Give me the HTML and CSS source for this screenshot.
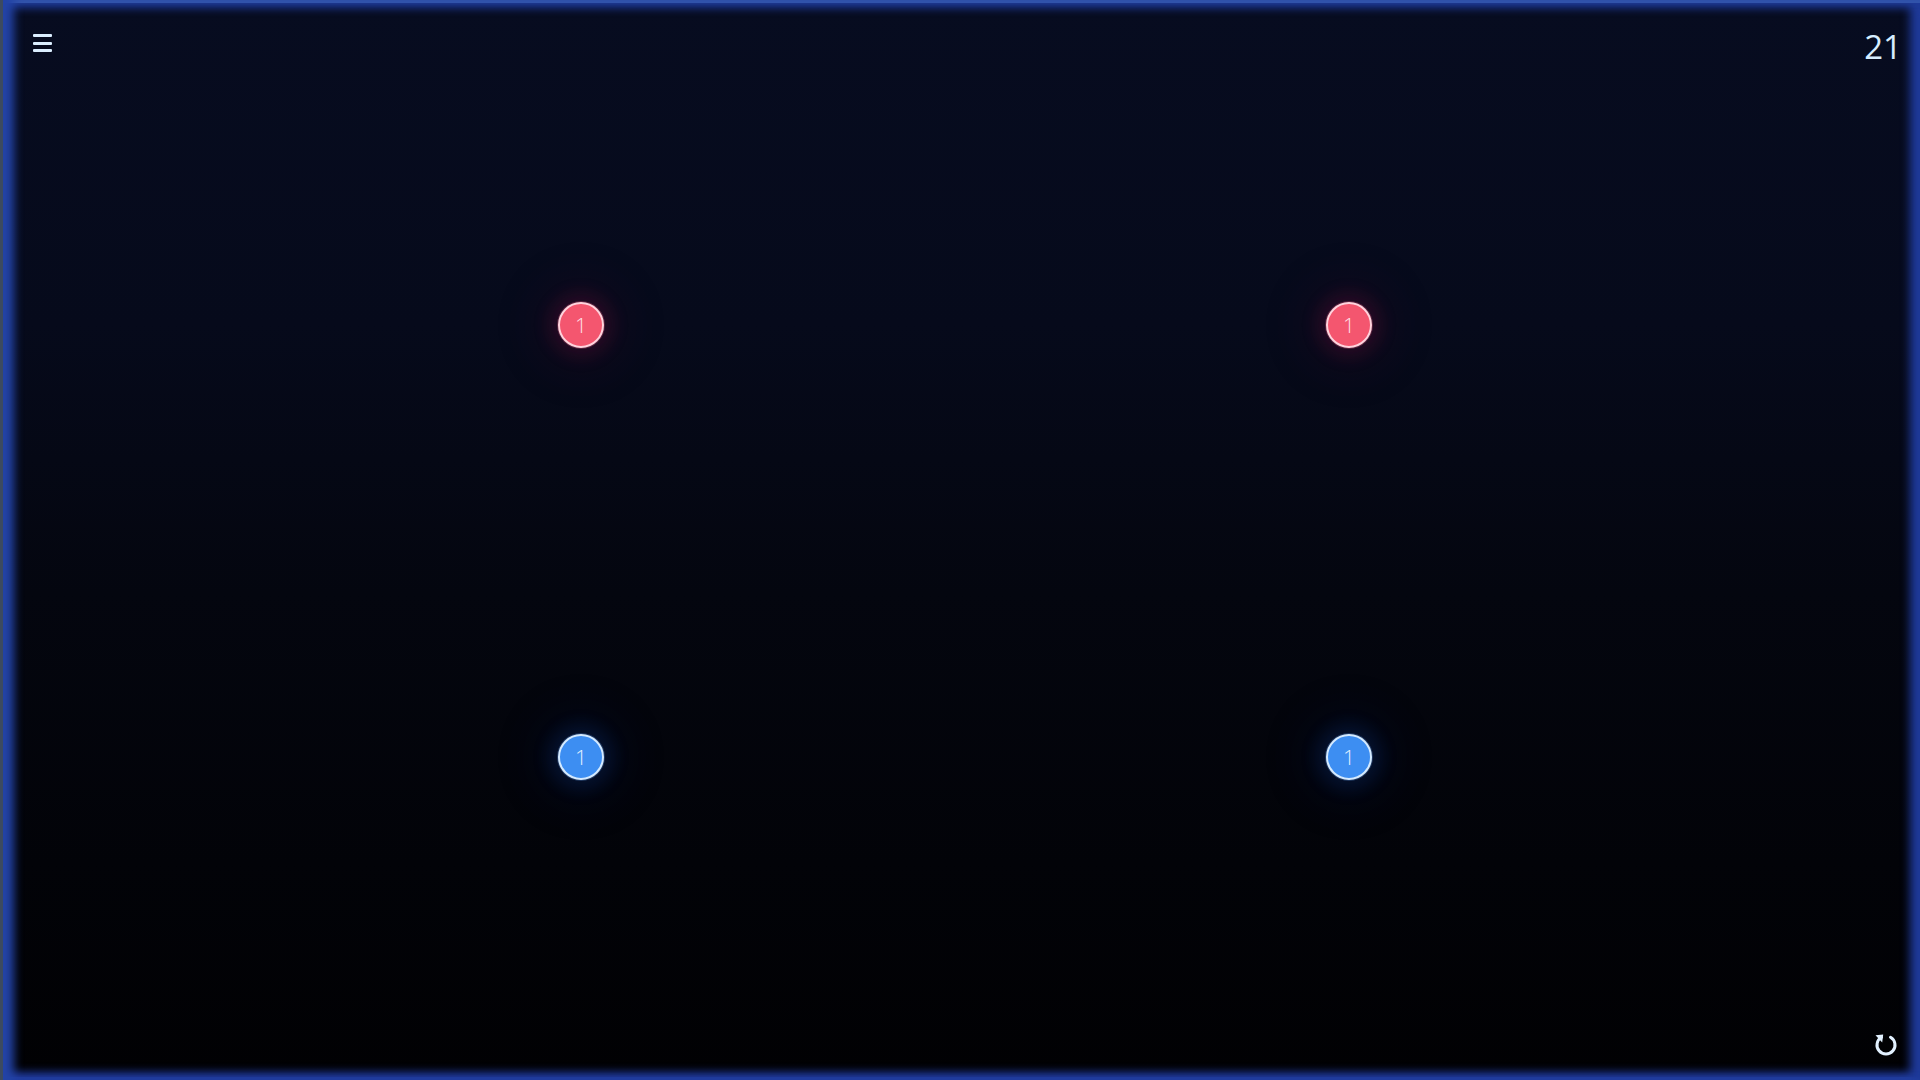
FILE: index.html
```html
<!DOCTYPE html>
<html lang="en">
<head>
<meta charset="utf-8">
<title>Board</title>
<link rel="stylesheet" href="styles.css">
</head>
<body>
<div class="frame">
  <header class="topbar">
    <button class="menu" aria-label="Menu">
      <span class="bar"></span><span class="bar"></span><span class="bar"></span>
    </button>
    <div class="score">21</div>
  </header>
  <main class="board">
    <div class="node red n1"><span>1</span></div>
    <div class="node red n2"><span>1</span></div>
    <div class="node blue n3"><span>1</span></div>
    <div class="node blue n4"><span>1</span></div>
  </main>
  <footer class="bottombar">
    <button class="restart" aria-label="Restart">
      <svg viewBox="0 0 28 26" width="28" height="26">
        <path d="M9.5 5.2 A9 9 0 1 0 18.5 5.2" fill="none" stroke="#e2f1ff" stroke-width="3" stroke-linecap="round"/>
        <path d="M3.5 3.2 L11.2 2.6 L10.2 10.4 Z" fill="#e2f1ff"/>
      </svg>
    </button>
  </footer>
</div>
</body>
</html>
```
FILE: styles.css
```css
html, body {
  margin: 0;
  padding: 0;
  width: 100%;
  height: 100%;
  background: #02030a;
  overflow: hidden;
}

.frame {
  position: relative;
  width: 1920px;
  height: 1080px;
  box-sizing: border-box;
  display: flex;
  flex-direction: column;
  background: linear-gradient(180deg, #070c20 0%, #060a1b 30%, #04060f 55%, #020308 80%, #010103 100%);
  box-shadow:
    inset 3px 0 0 #3c4a60,
    inset 16px 0 10px -2px #2343a6,
    inset 0 3px 0 #3557ac,
    inset 0 10px 8px -2px #1f3a96,
    inset -12px 0 10px -2px #1f3a9a,
    inset 0 -10px 8px -2px #20399a,
    inset 0 -3px 0 #2a46a0;
  font-family: "Open Sans", "Liberation Sans", sans-serif;
}

.topbar {
  display: flex;
  justify-content: space-between;
  align-items: flex-start;
  padding: 34px 18px 0 33px;
  height: 60px;
  box-sizing: border-box;
}

.menu {
  display: flex;
  flex-direction: column;
  gap: 4.5px;
  padding: 0;
  margin: 0;
  border: 0;
  background: none;
  width: 19px;
}

.menu .bar {
  display: block;
  width: 19px;
  height: 3px;
  border-radius: 1px;
  background: #dbeeff;
}

.score {
  color: #d6edff;
  font-family: "Open Sans", sans-serif;
  font-weight: 400;
  font-size: 33px;
  line-height: 1;
  margin-top: -4px;
  letter-spacing: 0;
}

.board {
  position: relative;
  flex: 1;
}

.node {
  position: absolute;
  width: 46px;
  height: 46px;
  box-sizing: border-box;
  border-radius: 50%;
  border: 2px solid;
  display: flex;
  align-items: center;
  justify-content: center;
}

.node span {
  font-family: "Open Sans", sans-serif;
  font-weight: 300;
  font-size: 21px;
  line-height: 1;
}

.node.red {
  background: #f4566f;
  border-color: #ffd3dd;
  box-shadow: 0 0 0 1px rgba(255, 120, 150, 0.25), 0 0 16px 10px rgba(130, 20, 60, 0.2), 0 0 44px 24px rgba(80, 10, 50, 0.14);
}
.node.red span { color: #ffe0e7; }

.node.blue {
  background: #3d8ef2;
  border-color: #d4eaff;
  box-shadow: 0 0 0 1px rgba(120, 180, 255, 0.25), 0 0 16px 10px rgba(20, 60, 140, 0.22), 0 0 44px 24px rgba(10, 30, 90, 0.14);
}
.node.blue span { color: #e2f1ff; }

.n1 { left: 558px; top: 242px; }
.n2 { left: 1326px; top: 242px; }
.n3 { left: 558px; top: 674px; }
.n4 { left: 1326px; top: 674px; }

.bottombar {
  display: flex;
  justify-content: flex-end;
  padding: 0 20px 22px 0;
}

.restart {
  padding: 0;
  margin: 0;
  border: 0;
  background: none;
  width: 28px;
  height: 26px;
}
.restart svg { display: block; }
```
